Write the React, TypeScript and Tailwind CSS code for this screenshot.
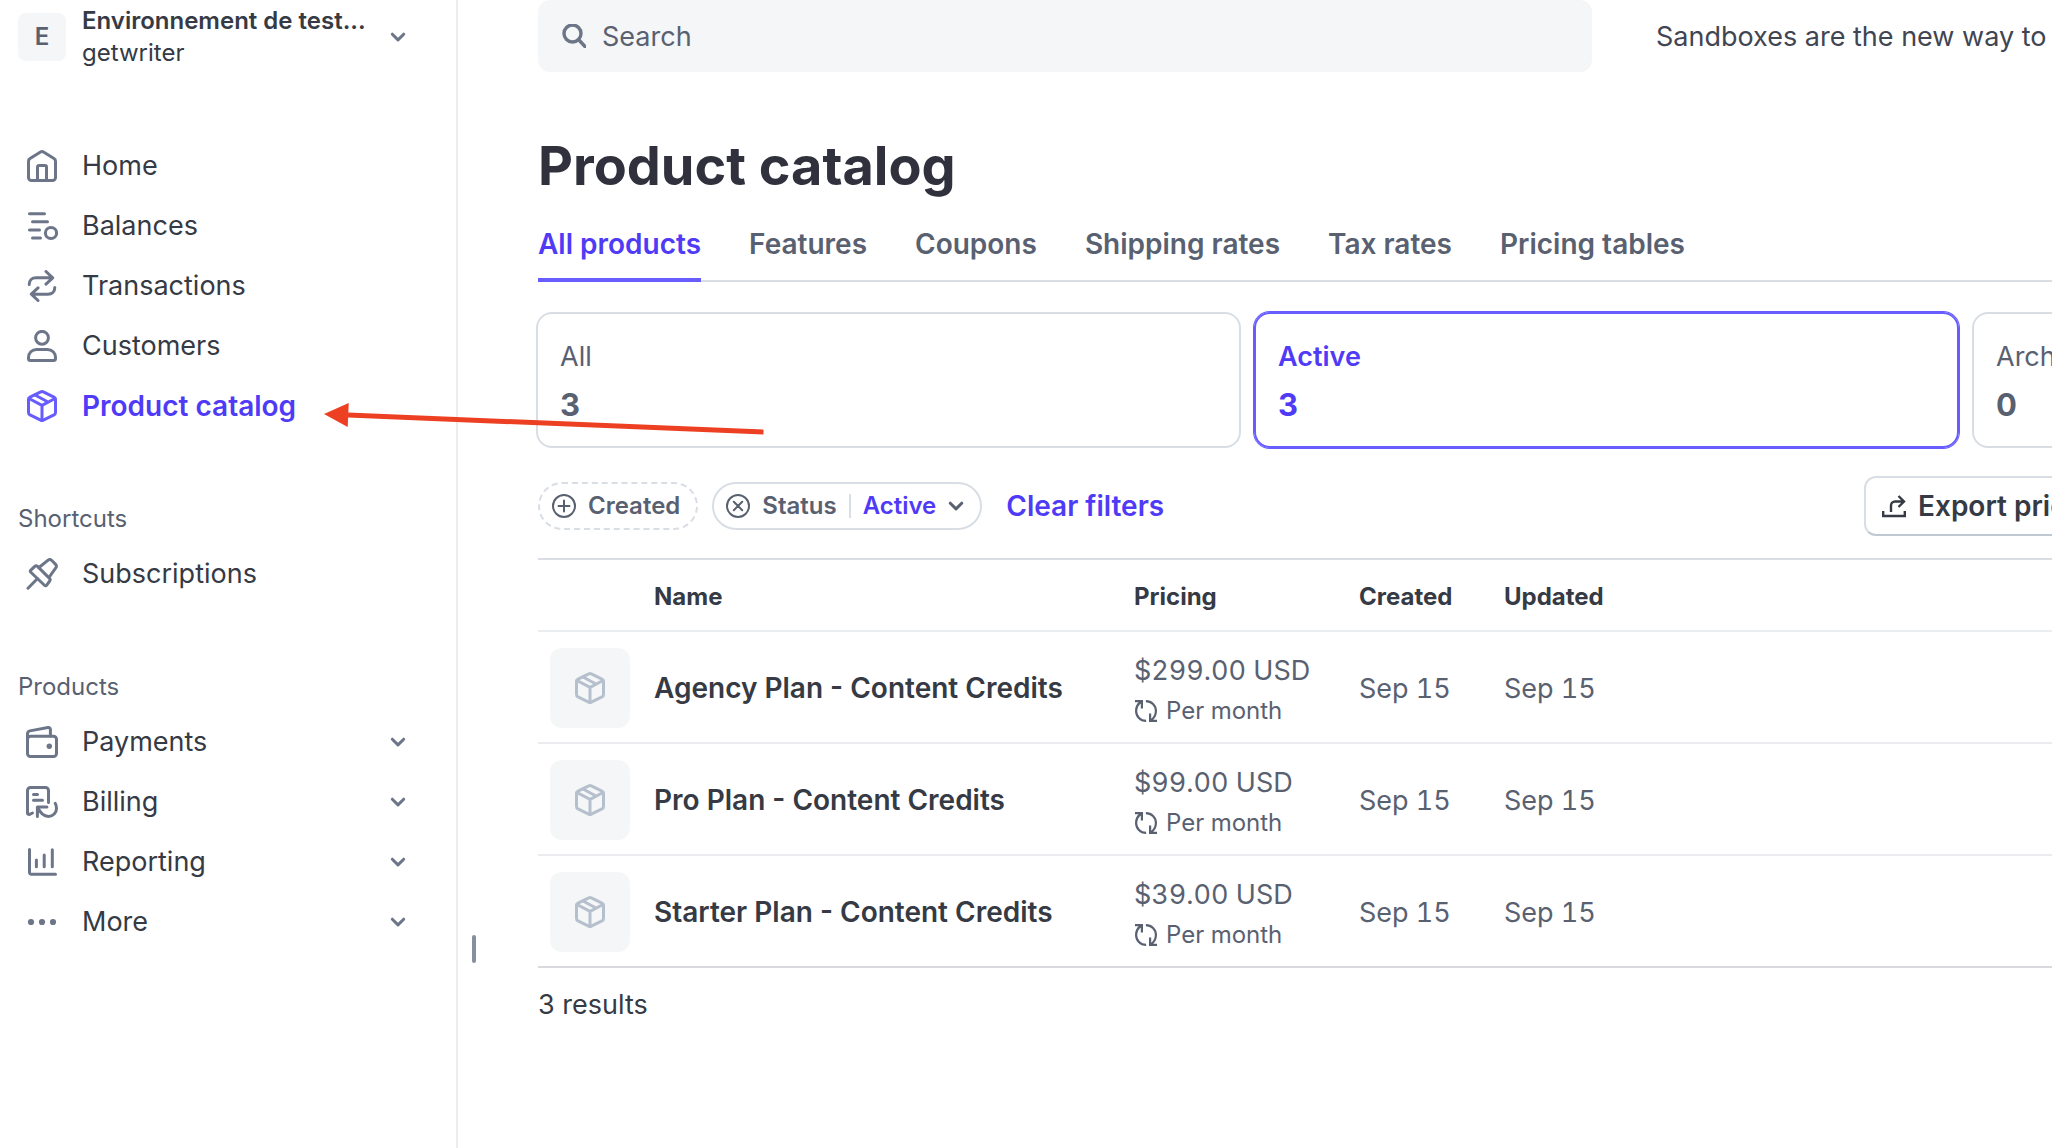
import type { ReactNode } from 'react';

type IconProps = { className?: string };

function NavSvg({ children, className = '' }: IconProps & { children: ReactNode }) {
  return (
    <svg
      viewBox="0 0 32 32"
      className={`h-8 w-8 shrink-0 ${className}`}
      fill="none"
      stroke="currentColor"
      strokeWidth="3"
      strokeLinecap="round"
      strokeLinejoin="round"
      aria-hidden="true"
    >
      {children}
    </svg>
  );
}

function HomeIcon() {
  return (
    <NavSvg>
      <path d="M2.5 11.2a3 3 0 0 1 1.5-2.6l10.5-6.6a2.8 2.8 0 0 1 3 0L28 8.600a3 3 0 0 1 1.500 2.600v16.300a3 3 0 0 1-3 3h-21a3 3 0 0 1-3-3z" />
      <path d="M11.500 30.500V17a1.500 1.500 0 0 1 1.500-1.500h6a1.500 1.500 0 0 1 1.500 1.500v13.500" />
    </NavSvg>
  );
}

function BalancesIcon() {
  return (
    <NavSvg>
      <path d="M3.500 3.700h15M6.500 11.700h15M3.500 20h10M6.500 28h8" />
      <circle cx="25" cy="23" r="5.600" />
    </NavSvg>
  );
}

function TransactionsIcon() {
  return (
    <NavSvg>
      <path d="M3.200 14.500c0-4 2.800-6.700 6.800-6.700h16.500M20 1.500l6.700 6.300-6.700 6.300" />
      <path d="M28.800 17.500c0 4-2.800 6.700-6.800 6.700H5.500M12 17.900l-6.700 6.300 6.700 6.300" />
    </NavSvg>
  );
}

function CustomersIcon() {
  return (
    <NavSvg>
      <circle cx="16" cy="7.800" r="6.400" />
      <path d="M2.500 28.400v-.9c0-4.500 3.500-8 8-8h11c4.500 0 8 3.500 8 8v.9a2 2 0 0 1-2 2h-23a2 2 0 0 1-2-2z" />
    </NavSvg>
  );
}

function BoxIcon({ className = '' }: IconProps) {
  return (
    <NavSvg className={className}>
      <path d="M14.700 1.900a2.800 2.800 0 0 1 2.600 0L28 7.200a2.700 2.700 0 0 1 1.500 2.400v12.800a2.700 2.700 0 0 1-1.500 2.400l-10.700 5.300a2.800 2.800 0 0 1-2.600 0L4 24.800a2.700 2.700 0 0 1-1.500-2.400V9.600A2.700 2.700 0 0 1 4 7.200z" />
      <path d="M3 8.500l13 6.800 13-6.800M16 15.300v15M9 5l13 7" />
    </NavSvg>
  );
}

function PinIcon() {
  return (
    <NavSvg>
      <path d="M2 30.200l9.500-9.700" />
      <path d="M4.600 12.400l4.200-4a2 2 0 0 1 2.700 0l12 12a2 2 0 0 1 .2 2.600l-3.200 4.400a1.200 1.200 0 0 1-1.800.1L4.600 14a1.100 1.100 0 0 1 0-1.600z" />
      <path d="M13 9.500l8.800-7.200a3 3 0 0 1 4 .2l3.600 3.600a3 3 0 0 1 .2 4l-6.400 9" />
    </NavSvg>
  );
}

function WalletIcon() {
  return (
    <NavSvg>
      <rect x="1.500" y="10.300" width="29" height="20.200" rx="3" />
      <path d="M1.500 14V7.800a3 3 0 0 1 2.400-2.900L22 1.600a2 2 0 0 1 2.400 2v6.200" />
      <circle cx="23.300" cy="20.300" r="2.700" fill="currentColor" stroke="none" />
    </NavSvg>
  );
}

function BillingIcon() {
  return (
    <NavSvg>
      <path d="M6.500 27l-2.900 1.400a1.500 1.500 0 0 1-2.100-1.300V4.500a3 3 0 0 1 3-3h15a3 3 0 0 1 3 3v12" />
      <path d="M7.500 8.400h4M7.500 14.300h9" />
      <path d="M11.400 30.500V21h9.500M11.800 21.400c2.300 5.400 5.800 9 10.700 9 4.600 0 8-3.600 8-8 0-2-.5-3.800-1.300-5.200" />
    </NavSvg>
  );
}

function ReportingIcon() {
  return (
    <NavSvg>
      <path d="M3.500 3.500v23a1.800 1.800 0 0 0 1.800 1.800h24.200M10.400 14v6.700M18.200 9v11.700M26.300 3.700v17" />
    </NavSvg>
  );
}

function MoreIcon() {
  return (
    <NavSvg>
      <g fill="currentColor" stroke="none">
        <circle cx="5" cy="16" r="3.100" />
        <circle cx="16" cy="16" r="3.100" />
        <circle cx="27" cy="16" r="3.100" />
      </g>
    </NavSvg>
  );
}

function Chevron({ className = '' }: IconProps) {
  return (
    <svg
      viewBox="0 0 16 16"
      className={`h-4 w-4 shrink-0 ${className}`}
      fill="none"
      stroke="currentColor"
      strokeWidth="3"
      strokeLinecap="round"
      strokeLinejoin="round"
      aria-hidden="true"
    >
      <path d="M2.300 5.200L8 10.900l5.700-5.700" />
    </svg>
  );
}

function SearchIcon() {
  return (
    <svg viewBox="0 0 24 24" className="h-6 w-6 shrink-0 text-[#6c7688]" fill="none" stroke="currentColor" strokeWidth="3.400" strokeLinecap="round" aria-hidden="true">
      <circle cx="10.500" cy="9.500" r="8.500" />
      <path d="M16.500 15.500l6.500 7" />
    </svg>
  );
}

function CircleIcon({ d }: { d: string }) {
  return (
    <svg viewBox="0 0 24 24" className="h-6 w-6 shrink-0" fill="none" stroke="currentColor" strokeWidth="2" strokeLinecap="round" aria-hidden="true">
      <circle cx="12" cy="12" r="11" />
      <path d={d} />
    </svg>
  );
}

function ExportIcon() {
  return (
    <svg viewBox="0 0 24 24" className="h-6 w-6 shrink-0" fill="none" stroke="currentColor" strokeWidth="2.400" aria-hidden="true">
      <path d="M1.200 17v5h21.600v-5" />
      <path d="M9 18v-6.500a4 4 0 0 1 4-4h9M16.500 2l5.500 5.500-5.500 5.500" />
    </svg>
  );
}

function RecurringIcon() {
  return (
    <svg viewBox="0 0 24 24" className="h-6 w-6 shrink-0" fill="none" stroke="currentColor" strokeWidth="2.200" aria-hidden="true">
      <path d="M1 2.100h6.900v7.400M7.500 2.500C3.800 4.800 2.100 8 2.100 12c0 5.600 4.300 9.900 10 9.900" />
      <path d="M23 21.900h-6.900v-7.400M16.500 21.500c3.700-2.300 5.400-5.500 5.400-9.500 0-5.600-4.300-9.900-10-9.900" />
    </svg>
  );
}

const mainNav = [
  { label: 'Home', icon: <HomeIcon /> },
  { label: 'Balances', icon: <BalancesIcon /> },
  { label: 'Transactions', icon: <TransactionsIcon /> },
  { label: 'Customers', icon: <CustomersIcon /> },
  { label: 'Product catalog', icon: <BoxIcon />, active: true },
];

const productNav = [
  { label: 'Payments', icon: <WalletIcon /> },
  { label: 'Billing', icon: <BillingIcon /> },
  { label: 'Reporting', icon: <ReportingIcon /> },
  { label: 'More', icon: <MoreIcon /> },
];

const tabs = ['All products', 'Features', 'Coupons', 'Shipping rates', 'Tax rates', 'Pricing tables'];

const stats = [
  { label: 'All', count: 3 },
  { label: 'Active', count: 3, active: true },
  { label: 'Archived', count: 0 },
];

const products = [
  { name: 'Agency Plan - Content Credits', price: '$299.00 USD' },
  { name: 'Pro Plan - Content Credits', price: '$99.00 USD' },
  { name: 'Starter Plan - Content Credits', price: '$39.00 USD' },
];

function NavLink({ label, icon, active }: { label: string; icon: ReactNode; active?: boolean }) {
  return (
    <a href="#" className={`flex h-[60px] items-center gap-6 pl-2 ${active ? 'text-[28px] font-semibold text-[#4f3bf6]' : ''}`}>
      <span className={active ? 'text-[#675dff]' : 'text-[#6c7688]'}>{icon}</span>
      {label}
    </a>
  );
}

function Sidebar() {
  return (
    <aside className="w-[458px] shrink-0 border-r-2 border-[#ebebf0] pl-[18px] text-[27px]">
      <button className="flex w-full items-center pt-[5px] pr-[50px] text-left text-[24px] leading-8">
        <span className="flex h-12 w-12 items-center justify-center rounded-lg bg-[#f5f6f8] font-semibold text-[#596171]">E</span>
        <span className="ml-4 flex-1">
          <span className="block font-semibold">Environnement de test...</span>
          <span className="block">getwriter</span>
        </span>
        <Chevron className="text-[#6c7688]" />
      </button>

      <nav className="pt-[67px]">
        {mainNav.map((item) => (
          <NavLink key={item.label} {...item} />
        ))}

        <h2 className="mt-[58px] h-[50px] text-[24px] leading-[50px] text-[#596171]">Shortcuts</h2>
        <NavLink label="Subscriptions" icon={<PinIcon />} />

        <h2 className="mt-[58px] h-[50px] text-[24px] leading-[50px] text-[#596171]">Products</h2>
        {productNav.map((item) => (
          <button key={item.label} className="flex h-[60px] w-full items-center gap-6 pr-[50px] pl-2 text-left">
            <span className="text-[#6c7688]">{item.icon}</span>
            <span className="flex-1">{item.label}</span>
            <Chevron className="text-[#6c7688]" />
          </button>
        ))}
      </nav>
    </aside>
  );
}

function Filters() {
  return (
    <div className="mt-7 -mr-[52px] flex h-[60px] items-center whitespace-nowrap text-[#596171]">
      <button className="flex h-12 items-center gap-3 rounded-full border-2 border-dashed border-[#d8dee4] pr-4 pl-3 text-[24px] font-semibold">
        <CircleIcon d="M12 6.500v11M6.500 12h11" />
        Created
      </button>
      <div className="ml-3.5 flex h-12 items-center rounded-full border-2 border-[#d8dee4] pr-4 pl-3 text-[24px] font-semibold">
        <button className="flex items-center gap-3">
          <CircleIcon d="M7.800 7.800l8.400 8.400M16.200 7.800l-8.400 8.400" />
          Status
        </button>
        <span className="mx-3 h-6 w-0.5 bg-[#d8dee4]" />
        <button className="flex items-center gap-3 text-[#4f3bf6]">
          Active
          <Chevron className="text-[#596171]" />
        </button>
      </div>
      <button className="ml-6 text-[28px] font-semibold text-[#4f3bf6]">Clear filters</button>
      <button className="ml-auto flex h-[60px] w-[240px] shrink-0 items-center gap-3 rounded-xl border-2 border-[#d8dee4] border-b-[#c0c8d2] pl-4 text-[28px] font-semibold text-[#353a44]">
        <ExportIcon />
        Export prices
      </button>
    </div>
  );
}

function ProductTable() {
  return (
    <table className="mt-[22px] w-full table-fixed border-t-2 border-[#d8dee4] text-left text-[27px] text-[#596171]">
      <colgroup>
        <col className="w-[116px]" />
        <col className="w-[480px]" />
        <col className="w-[225px]" />
        <col className="w-[145px]" />
        <col />
      </colgroup>
      <thead>
        <tr className="h-[72px] border-b-2 border-[#ebeef1] text-[24px] text-[#353a44]">
          <th aria-label="Image" />
          <th className="pt-1 font-bold">Name</th>
          <th className="pt-1 font-bold">Pricing</th>
          <th className="pt-1 font-bold">Created</th>
          <th className="pt-1 font-bold">Updated</th>
        </tr>
      </thead>
      <tbody>
        {products.map((product) => (
          <tr key={product.name} className="h-28 border-b-2 border-[#ebebf0] last:border-[#d8dae0]">
            <td className="pt-0.5 pl-3">
              <div className="flex h-20 w-20 items-center justify-center rounded-xl bg-[#f5f6f8] text-[#b6c0cd]">
                <BoxIcon />
              </div>
            </td>
            <td className="pt-0.5 text-[28px] font-semibold text-[#353a44]">{product.name}</td>
            <td className="pt-2 tabular-nums">
              <div className="leading-10">{product.price}</div>
              <div className="flex items-center gap-2 text-[24px] leading-10">
                <RecurringIcon />
                Per month
              </div>
            </td>
            <td className="pt-1 tabular-nums">Sep 15</td>
            <td className="pt-1 tabular-nums">Sep 15</td>
          </tr>
        ))}
      </tbody>
    </table>
  );
}

export default function App() {
  return (
    <div className="relative flex min-h-screen overflow-hidden bg-white font-[Inter,sans-serif] text-[#353a44]">
      <Sidebar />

      <main className="relative min-w-0 flex-1 pl-20">
        <span className="absolute top-[935px] left-3.5 h-7 w-1 rounded-full bg-[#87909f]" />

        <div className="flex h-[72px] items-center gap-16 text-[27px]">
          <label className="flex h-full w-[1054px] shrink-0 items-center gap-4 rounded-xl bg-[#f5f6f8] px-6">
            <SearchIcon />
            <input type="search" placeholder="Search" aria-label="Search" className="w-full pt-0.5 outline-none placeholder:text-[#596171]" />
          </label>
          <p className="pt-0.5 whitespace-nowrap text-[#414552]">Sandboxes are the new way to</p>
        </div>

        <h1 className="mt-16 text-[54px] leading-[60px] font-bold text-[#30313d]">Product catalog</h1>

        <div className="mt-5 flex gap-12 border-b-2 border-[#d8dee4] text-[28px] font-semibold whitespace-nowrap text-[#596171]">
          {tabs.map((tab, i) => (
            <a
              key={tab}
              href="#"
              className={`-mb-0.5 h-[66px] border-b-4 leading-[56px] ${i === 0 ? 'border-[#675dff] text-[#4f3bf6]' : 'border-transparent'}`}
            >
              {tab}
            </a>
          ))}
        </div>

        <div className="mt-[30px] -ml-0.5 flex gap-[13px]">
          {stats.map((stat) => (
            <button
              key={stat.label}
              className={`h-[136px] w-[705px] shrink-0 rounded-2xl border-2 px-[22px] pt-0.5 text-left ${
                stat.active ? 'border-[#675dff] text-[#4f3bf6] ring-1 ring-[#675dff]' : 'border-[#d8dee4] text-[#596171]'
              }`}
            >
              <div className={`text-[27px] leading-[48px] ${stat.active ? 'font-semibold' : ''}`}>{stat.label}</div>
              <div className="text-[31px] leading-[48px] font-bold">{stat.count}</div>
            </button>
          ))}
        </div>

        <Filters />
        <ProductTable />
        <p className="mt-4 text-[27px] leading-[42px]">3 results</p>
      </main>

      {/* arrow pointing at the active nav item */}
      <svg viewBox="0 0 440 30" className="absolute top-[402px] left-[324px] h-[30px] w-[440px] overflow-visible text-[#ed4023]" aria-hidden="true">
        <path d="M0 12L24.700 1l-1 24z" fill="currentColor" />
        <path d="M24 13l415.500 17" stroke="currentColor" strokeWidth="5" />
      </svg>
    </div>
  );
}
